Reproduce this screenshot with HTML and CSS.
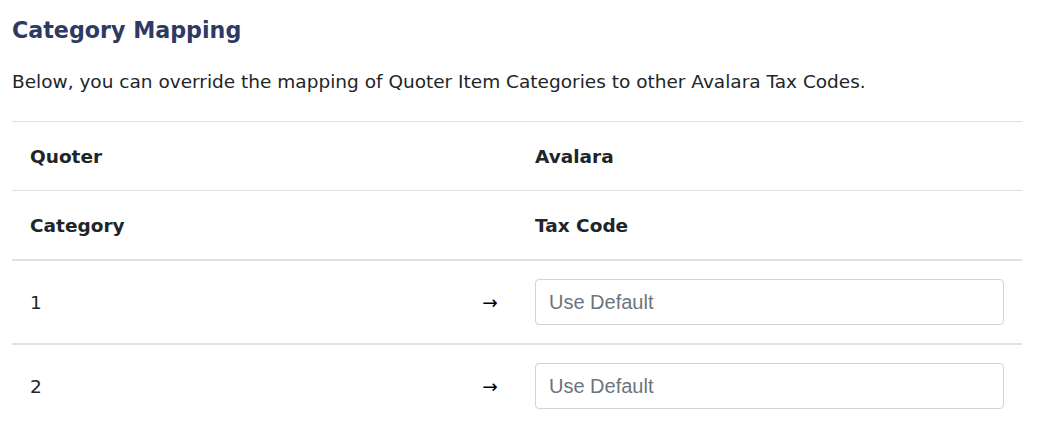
FILE: index.html
```html
<!DOCTYPE html>
<html>
<head>
<meta charset="utf-8">
<link rel="stylesheet" href="styles.css">
</head>
<body>
<div class="page">
  <h2 class="title">Category Mapping</h2>
  <p class="intro">Below, you can override the mapping of Quoter Item Categories to other Avalara Tax Codes.</p>
  <div class="table">
    <div class="row head">
      <div class="cell">Quoter</div>
      <div class="cell"></div>
      <div class="cell">Avalara</div>
    </div>
    <div class="row head last">
      <div class="cell">Category</div>
      <div class="cell"></div>
      <div class="cell">Tax Code</div>
    </div>
    <div class="row body">
      <div class="cell">1</div>
      <div class="cell arrow">→</div>
      <div class="cell"><input class="field" type="text" placeholder="Use Default"></div>
    </div>
    <div class="row body">
      <div class="cell">2</div>
      <div class="cell arrow">→</div>
      <div class="cell"><input class="field" type="text" placeholder="Use Default"></div>
    </div>
  </div>
</div>
</body>
</html>
```
FILE: styles.css
```css
html, body {
  margin: 0;
  padding: 0;
  background: #ffffff;
}
.page {
  padding: 0 18px 0 12px;
  font-family: "DejaVu Sans", Verdana, sans-serif;
  color: #212529;
}
.title {
  margin: 0;
  padding-top: 16px;
  font-size: 22.2px;
  line-height: 28px;
  font-weight: bold;
  color: #2e3a64;
}
.intro {
  margin: 0;
  padding-top: 25px;
  font-size: 18.5px;
  line-height: 26px;
}
.table {
  margin-top: 26px;
  width: 1010px;
}
.row {
  display: grid;
  grid-template-columns: 451px 54px 505px;
  border-top: 1px solid #dee2e6;
}
.row.body {
  border-top: 2px solid #dee2e6;
}
.row.head.last {
  border-bottom: 2px solid #dee2e6;
}
.row.head.last + .row.body {
  border-top: 0;
}
.cell {
  display: flex;
  align-items: center;
  padding: 0 18px;
}
.row.head .cell {
  height: 68px;
  font-weight: bold;
  font-size: 18.5px;
}
.row.body .cell {
  height: 82px;
  font-size: 18.5px;
}
.cell.arrow {
  justify-content: center;
  padding: 0;
  font-size: 17px;
  color: #000;
}
.field {
  box-sizing: border-box;
  width: 470px;
  height: 46px;
  margin: 0;
  padding: 0 13px;
  border: 1px solid #ced4da;
  border-radius: 4px;
  background: #fff;
  font-family: "Liberation Sans", Arial, sans-serif;
  font-size: 20px;
  color: #495057;
  outline: none;
}
.field::placeholder {
  color: #6c757d;
  opacity: 1;
}
```
